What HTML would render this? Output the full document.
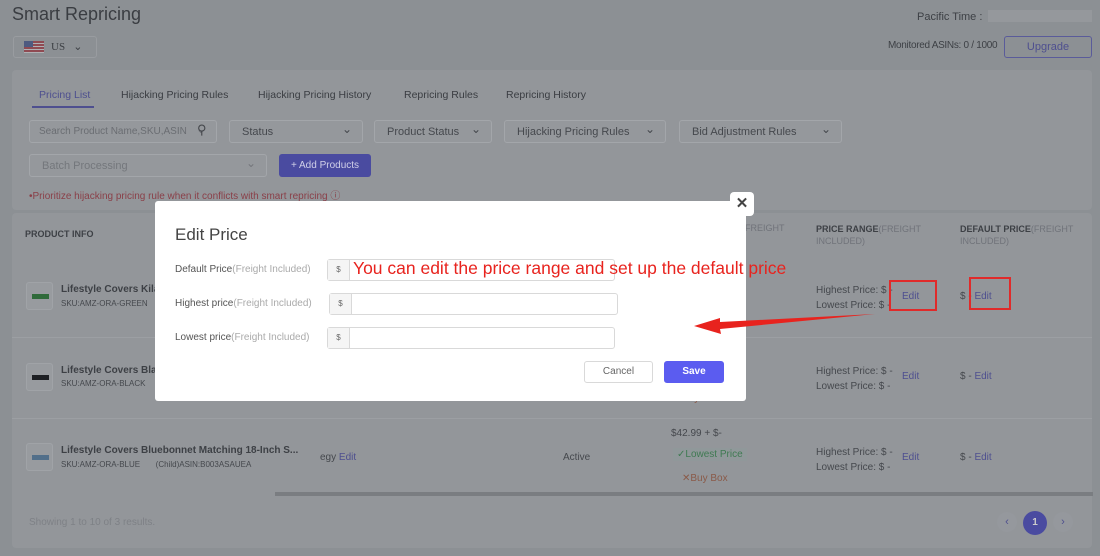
<!DOCTYPE html>
<html style="background:#8c9094"><head><meta charset="utf-8"><style>
*{box-sizing:border-box;margin:0;padding:0}
html,body{background:#8c9094}
body{width:1100px;height:556px;overflow:hidden;font-family:"Liberation Sans",sans-serif;position:relative;color:#3a3d42}
.a{position:absolute;white-space:nowrap}
.card{position:absolute;background:#93969a;border-radius:4px}
.sel{position:absolute;height:23px;border:1px solid #a3a6aa;border-radius:3px;background:#95989c;font-size:11px;color:#45484d;padding:5px 12px}
.sel:after{content:"⌄";position:absolute;right:10px;top:1px;font-size:12px}
.hd{font-size:9px;font-weight:bold;color:#3d4045}
.hd span{font-weight:normal;color:#70737a}
.pname{font-size:10px;font-weight:bold;color:#3d4045}
.sku{font-size:8px;color:#45484d}
.thumb{position:absolute;width:27px;height:28px;border:1px solid #a0a3a7;border-radius:3px;background:#989b9f}
.thumb i{position:absolute;left:5px;top:11px;width:17px;height:5px}
.sm{font-size:10px;color:#45484d}
.sm .edit,.edit{color:#4e4f8f}
.modal{position:absolute;left:155px;top:201px;width:591px;height:200px;background:#fff;border-radius:3px}
.lab{position:absolute;left:20px;font-size:10px;color:#555}
.lab span{color:#aaa}
.inp{position:absolute;height:22px;border:1px solid #d9d9d9;border-radius:3px}
.inp b{position:absolute;left:0;top:0;width:22px;height:20px;background:#f5f5f5;border-right:1px solid #d9d9d9;font-size:8px;font-weight:normal;color:#666;text-align:center;line-height:20px}
</style></head><body>
<div class="a" style="left:12px;top:4px;font-size:18px;color:#3a3d42">Smart Repricing</div>
<div class="a" style="left:917px;top:11px;font-size:11px;color:#3d4045">Pacific Time :</div>
<div class="a" style="left:988px;top:10px;width:104px;height:12px;background:#95989c"></div>
<div class="a" style="left:13px;top:36px;width:84px;height:22px;border:1px solid #999ca0;border-radius:3px"></div>
<div class="a" style="left:24px;top:41px;width:20px;height:12px;background:repeating-linear-gradient(#8f4a52 0 2px,#b0b0b4 2px 3px)"><div style="width:9px;height:6px;background:#4e5a80"></div></div>
<div class="a" style="left:51px;top:40px;font-size:11px;font-family:'Liberation Serif',serif;color:#3d4045">US &nbsp;&nbsp;⌄</div>
<div class="a" style="left:888px;top:40px;font-size:10px;color:#3d4045;letter-spacing:-0.3px">Monitored ASINs: 0 / 1000</div>
<div class="a" style="left:1004px;top:36px;width:88px;height:22px;border:1px solid #5a5b9a;border-radius:3px;color:#4e4f8f;font-size:11px;text-align:center;line-height:20px">Upgrade</div>

<div class="card" style="left:12px;top:70px;width:1080px;height:140px"></div>
<div class="a" style="left:39px;top:89px;font-size:10.5px;color:#4e4f8f">Pricing List</div>
<div class="a" style="left:32px;top:106px;width:62px;height:2px;background:#4e4f8f"></div>
<div class="a" style="left:121px;top:89px;font-size:10.5px">Hijacking Pricing Rules</div>
<div class="a" style="left:258px;top:89px;font-size:10.5px">Hijacking Pricing History</div>
<div class="a" style="left:404px;top:89px;font-size:10.5px">Repricing Rules</div>
<div class="a" style="left:506px;top:89px;font-size:10.5px">Repricing History</div>
<div class="sel" style="left:29px;top:120px;width:188px;color:#6a6d72;padding-left:9px;font-size:10px">Search Product Name,SKU,ASIN</div>
<div class="a" style="left:197px;top:122px;font-size:13px;color:#45484d">⚲</div>
<div class="sel" style="left:229px;top:120px;width:134px">Status</div>
<div class="sel" style="left:374px;top:120px;width:118px">Product Status</div>
<div class="sel" style="left:504px;top:120px;width:162px">Hijacking Pricing Rules</div>
<div class="sel" style="left:679px;top:120px;width:163px">Bid Adjustment Rules</div>
<div class="sel" style="left:29px;top:154px;width:238px;color:#74777c">Batch Processing</div>
<div class="a" style="left:279px;top:154px;width:92px;height:23px;background:#4a4ba0;border-radius:3px;color:#d0d0e8;font-size:10px;text-align:center;line-height:23px">+ Add Products</div>
<div class="a" style="left:29px;top:187px;font-size:10px;color:#8a3f48">•Prioritize hijacking pricing rule when it conflicts with smart repricing ⓘ</div>

<div class="card" style="left:12px;top:213px;width:1080px;height:335px"></div>
<div class="a hd" style="left:25px;top:229px">PRODUCT INFO</div>
<div class="a hd" style="left:745px;top:223px"><span>FREIGHT</span></div>
<div class="a hd" style="left:816px;top:223px;line-height:12px">PRICE RANGE<span>(FREIGHT<br>INCLUDED)</span></div>
<div class="a hd" style="left:960px;top:223px;line-height:12px">DEFAULT PRICE<span>(FREIGHT<br>INCLUDED)</span></div>
<div class="a" style="left:12px;top:337px;width:1080px;height:1px;background:#9c9fa3"></div>
<div class="a" style="left:12px;top:418px;width:1080px;height:1px;background:#9c9fa3"></div>

<div class="thumb" style="left:26px;top:282px"><i style="background:#2f6a3a"></i></div>
<div class="a pname" style="left:61px;top:284px">Lifestyle Covers Kila</div>
<div class="a sku" style="left:61px;top:299px">SKU:AMZ-ORA-GREEN</div>
<div class="thumb" style="left:26px;top:363px"><i style="background:#1e2024"></i></div>
<div class="a pname" style="left:61px;top:365px">Lifestyle Covers Bla</div>
<div class="a sku" style="left:61px;top:379px">SKU:AMZ-ORA-BLACK</div>
<div class="thumb" style="left:26px;top:443px"><i style="background:#526f8a"></i></div>
<div class="a pname" style="left:61px;top:445px">Lifestyle Covers Bluebonnet Matching 18-Inch S...</div>
<div class="a sku" style="left:61px;top:460px">SKU:AMZ-ORA-BLUE &nbsp;&nbsp;&nbsp;&nbsp;&nbsp;&nbsp;(Child)ASIN:B003ASAUEA</div>
<div class="a sm" style="left:320px;top:452px">egy <span class="edit">Edit</span></div>
<div class="a sm" style="left:563px;top:452px">Active</div>
<div class="a sm" style="left:671px;top:428px">$42.99 + $-</div>
<div class="a" style="left:673px;top:448px;font-size:10px;color:#3f7a52;background:#90989a;padding:1px 4px">✓Lowest Price</div>
<div class="a" style="left:678px;top:472px;font-size:10px;color:#8a5a48;padding:1px 4px">✕Buy Box</div>
<div class="a" style="left:682px;top:393px;font-size:10px;color:#8a5a48">Buy Box</div>

<div class="a sm" style="left:816px;top:283px;line-height:15px">Highest Price: $ -<br>Lowest Price: $ -</div>
<div class="a sm edit" style="left:902px;top:291px">Edit</div>
<div class="a sm" style="left:960px;top:291px">$ - <span class="edit">Edit</span></div>
<div class="a sm" style="left:816px;top:364px;line-height:15px">Highest Price: $ -<br>Lowest Price: $ -</div>
<div class="a sm edit" style="left:902px;top:371px">Edit</div>
<div class="a sm" style="left:960px;top:371px">$ - <span class="edit">Edit</span></div>
<div class="a sm" style="left:816px;top:445px;line-height:15px">Highest Price: $ -<br>Lowest Price: $ -</div>
<div class="a sm edit" style="left:902px;top:452px">Edit</div>
<div class="a sm" style="left:960px;top:452px">$ - <span class="edit">Edit</span></div>
<div class="a" style="left:889px;top:280px;width:48px;height:31px;border:2px solid #e02a2a"></div>
<div class="a" style="left:969px;top:277px;width:42px;height:33px;border:2px solid #e02a2a"></div>

<div class="a" style="left:275px;top:492px;width:818px;height:4px;background:#7a7d81"></div>
<div class="a" style="left:29px;top:517px;font-size:10px;color:#7e8186">Showing 1 to 10 of 3 results.</div>
<div class="a" style="left:997px;top:512px;width:20px;height:20px;border-radius:10px;background:#95989d;color:#4e4f8f;font-size:11px;text-align:center;line-height:20px">‹</div>
<div class="a" style="left:1023px;top:511px;width:24px;height:24px;border-radius:12px;background:#4a4ba0;color:#ccc;font-size:10px;font-weight:bold;text-align:center;line-height:24px">1</div>
<div class="a" style="left:1053px;top:512px;width:20px;height:20px;border-radius:10px;background:#95989d;color:#4e4f8f;font-size:11px;text-align:center;line-height:20px">›</div>

<div class="modal">
<div class="a" style="left:20px;top:24px;font-size:17px;color:#444">Edit Price</div>
<div class="lab" style="top:63px">Default Price<span>(Freight Included)</span></div>
<div class="inp" style="left:172px;top:58px;width:288px"><b>$</b></div>
<div class="lab" style="top:97px">Highest price<span>(Freight Included)</span></div>
<div class="inp" style="left:174px;top:92px;width:289px"><b>$</b></div>
<div class="lab" style="top:131px">Lowest price<span>(Freight Included)</span></div>
<div class="inp" style="left:172px;top:126px;width:288px"><b>$</b></div>
<div class="a" style="left:429px;top:160px;width:69px;height:22px;border:1px solid #d9d9d9;border-radius:3px;font-size:10px;color:#666;text-align:center;line-height:20px">Cancel</div>
<div class="a" style="left:509px;top:160px;width:60px;height:22px;background:#5b5cf0;border-radius:3px;font-size:10px;font-weight:bold;color:#fff;text-align:center;line-height:22px">Save</div>
</div>
<div class="a" style="left:352px;top:258px;font-size:17.5px;color:#e8231e;padding:0 1px">You can edit the price range and set up the default price</div>
<div class="a" style="left:730px;top:192px;width:24px;height:24px;background:#fff;border-radius:4px;font-size:15px;font-weight:bold;text-align:center;line-height:24px;color:#444">✕</div>

<svg class="a" style="left:690px;top:310px" width="190" height="30"><polygon points="185,4 30,12 30,8 4,16 31,24 30,19" fill="#e8231e"/></svg>
</body></html>
